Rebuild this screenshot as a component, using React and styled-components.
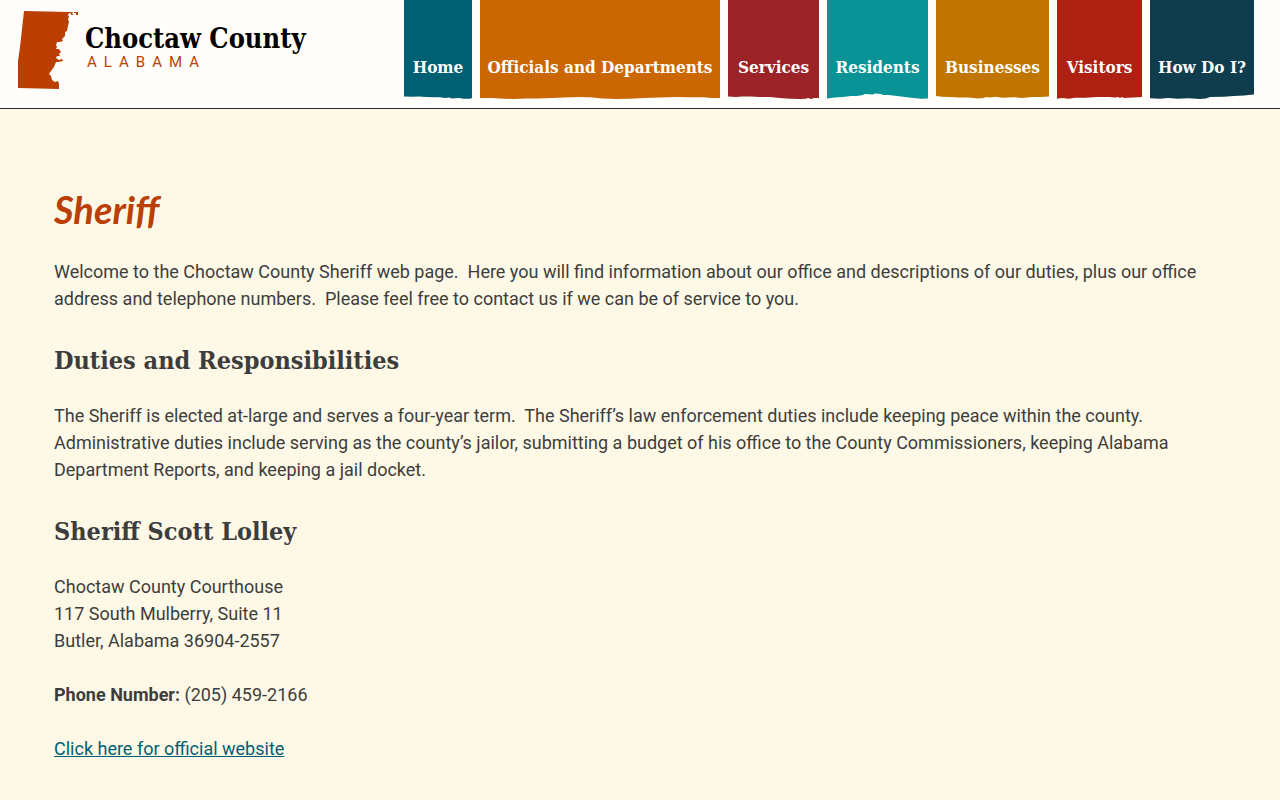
import React from "react";
import styled, { createGlobalStyle } from "styled-components";

// edge: the torn strip along the bottom of the tab, drawn in the header colour
const navItems = [
  {
    label: "Home",
    color: "#005f73",
    width: 68,
    edge: "M0 4.6L8 4.8L15 4.6L22 5L30 5.3L36 5.2L41 6L45 5.6L48 6.4L55 6L60 6.8L66 6.8L68 6V8H0Z",
  },
  {
    label: "Officials and Departments",
    color: "#ca6702",
    width: 240,
    edge: "M0 6L12 6L20 6.6L34 7L46 6.4L58 6.6L72 6L84 5.4L98 5L110 5.2L122 6.4L136 7L150 6.8L164 6L180 5.6L196 5L210 5.3L224 5.2L231 6L240 6V8H0Z",
  },
  {
    label: "Services",
    color: "#9b2226",
    width: 91,
    edge: "M0 4.4L8 5L14 4.6L22 4.4L32 5L42 5L52 6L62 6.8L72 7L78 6.8L80 6L83 7L86 6L91 6V8H0Z",
  },
  {
    label: "Residents",
    color: "#0a9396",
    width: 101,
    edge: "M0 6.5L8 5.4L16 5L24 4L30 4L36 3L38 2L46 2.4L48 1.6L54 2L56 3L62 3L70 4L78 5L86 6L94 6.8L101 6.6V8H0Z",
  },
  {
    label: "Businesses",
    color: "#bf7500",
    width: 113,
    edge: "M0 4L6 4.8L14 5L22 5.6L32 5.4L42 6.4L48 6L50 5L54 5.4L60 4.8L66 5.8L78 5.2L86 6L96 5L105 5L113 4.4V8H0Z",
  },
  {
    label: "Visitors",
    color: "#ae2012",
    width: 85,
    edge: "M0 6.8L5 6L12 6.8L18 5.8L28 5.8L40 5L52 5L58 5.4L61 5L63 6L65 5L67 6L76 5.6L85 5V8H0Z",
  },
  {
    label: "How Do I?",
    color: "#0f3d4e",
    width: 104,
    edge: "M0 6.2L10 6.8L18 6L28 6.8L38 6.2L50 7L56 6.4L60 5L74 4.8L84 4L94 3.4L104 2.6V8H0Z",
  },
];

const Logo = () => (
  <LogoLink href="#">
    <CountyShape viewBox="0 0 60 78" aria-hidden="true">
      <path
        fill="#bb3e03"
        d="M6 0L51 1L55 1L54 3L51 2L50 4L51 6L50 8L51 11L50 15L49 20L47 21L47 25L44 28L45 30L42 31L39 31L38 34L39 36L38 38L41 38L43 41L41 43L42 45L39 45L38 47L41 49L44 48L45 50L40 51L38 51L36 56L33 60L31 63L33 65L34 69L37 71L40 70L41 73L41 78L0 77L0 50L2 36Z"
      />
      <path fill="#bb3e03" d="M56 1L60 1L60 4L58 4L58 2L56 2ZM53 3L55 3L55 4L53 4Z" />
    </CountyShape>
    <LogoText>
      <CountyName>Choctaw County</CountyName>
      <StateName>ALABAMA</StateName>
    </LogoText>
  </LogoLink>
);

const App = () => {
  return (
    <>
      <GlobalStyle />
      <Header>
        <Logo />
        <Nav>
          {navItems.map((item) => (
            <Tab key={item.label} href="#" $color={item.color} $width={item.width}>
              {item.label}
              <TornEdge
                viewBox={`0 0 ${item.width} 8`}
                preserveAspectRatio="none"
                aria-hidden="true"
              >
                <path fill="#fffefa" d={item.edge} />
              </TornEdge>
            </Tab>
          ))}
        </Nav>
      </Header>
      <Main>
        <Title>Sheriff</Title>
        <Text>
          Welcome to the Choctaw County Sheriff web page.&nbsp; Here you will
          find information about our office and descriptions of our duties, plus
          our office address and telephone numbers.&nbsp; Please feel free to
          contact us if we can be of service to you.
        </Text>
        <Heading>Duties and Responsibilities</Heading>
        <Text>
          The Sheriff is elected at-large and serves a four-year term.&nbsp; The
          Sheriff’s law enforcement duties include keeping peace within the
          county. Administrative duties include serving as the county’s jailor,
          submitting a budget of his office to the County Commissioners, keeping
          Alabama Department Reports, and keeping a jail docket.
        </Text>
        <Heading>Sheriff Scott Lolley</Heading>
        <Text>
          Choctaw County Courthouse
          <br />
          117 South Mulberry, Suite 11
          <br />
          Butler, Alabama 36904-2557
        </Text>
        <Text>
          <strong>Phone Number:</strong> (205) 459-2166
        </Text>
        <Text>
          <SiteLink href="#">Click here for official website</SiteLink>
        </Text>
      </Main>
    </>
  );
};

export default App;

const slab = `"Roboto Slab", "DejaVu Serif Condensed", "DejaVu Serif", serif`;

const GlobalStyle = createGlobalStyle`
  * {
    box-sizing: border-box;
  }

  body {
    margin: 0;
    background-color: #fef9e7;
    color: #3d3d3d;
    font-family: Roboto, sans-serif;
    font-size: 18px;
    line-height: 27px;
  }
`;

const Header = styled.header`
  display: flex;
  justify-content: space-between;
  align-items: flex-start;
  padding: 0 26px 8px 18px;
  background-color: #fffefa;
  border-bottom: 1px solid #2b2b2b;
`;

const LogoLink = styled.a`
  display: flex;
  align-items: flex-start;
  gap: 7px;
  padding-top: 11px;
  text-decoration: none;
`;

const CountyShape = styled.svg`
  width: 60px;
  height: 78px;
`;

const LogoText = styled.div`
  padding-top: 12px;
`;

const CountyName = styled.div`
  color: #000000;
  font-family: ${slab};
  font-size: 27px;
  font-weight: 700;
  line-height: 32px;
  white-space: nowrap;
`;

const StateName = styled.div`
  padding-left: 2px;
  color: #bb3e03;
  font-size: 15px;
  letter-spacing: 7px;
  line-height: 15px;
`;

const Nav = styled.nav`
  display: flex;
  gap: 8px;
`;

const Tab = styled.a`
  position: relative;
  display: flex;
  justify-content: center;
  align-items: flex-end;
  width: ${(props) => props.$width}px;
  height: 100px;
  padding-bottom: 19px;
  background-color: ${(props) => props.$color};
  color: #ffffff;
  font-family: ${slab};
  font-size: 17px;
  font-weight: 700;
  text-decoration: none;
  white-space: nowrap;

  &:hover {
    text-decoration: underline;
  }
`;

const TornEdge = styled.svg`
  position: absolute;
  left: 0;
  bottom: 0;
  width: 100%;
  height: 8px;
`;

const Main = styled.main`
  padding: 72px 54px 40px;
`;

const Title = styled.h1`
  margin: 0 0 20px;
  color: #bb3e03;
  font-family: Lato, sans-serif;
  font-size: 38px;
  font-style: italic;
  font-weight: 700;
  line-height: 57px;
`;

const Heading = styled.h2`
  margin: 28px 0 20px;
  font-family: ${slab};
  font-size: 25px;
  font-weight: 700;
  line-height: 42px;
`;

const Text = styled.p`
  margin: 0 0 27px;
`;

const SiteLink = styled.a`
  color: #005f73;
`;
